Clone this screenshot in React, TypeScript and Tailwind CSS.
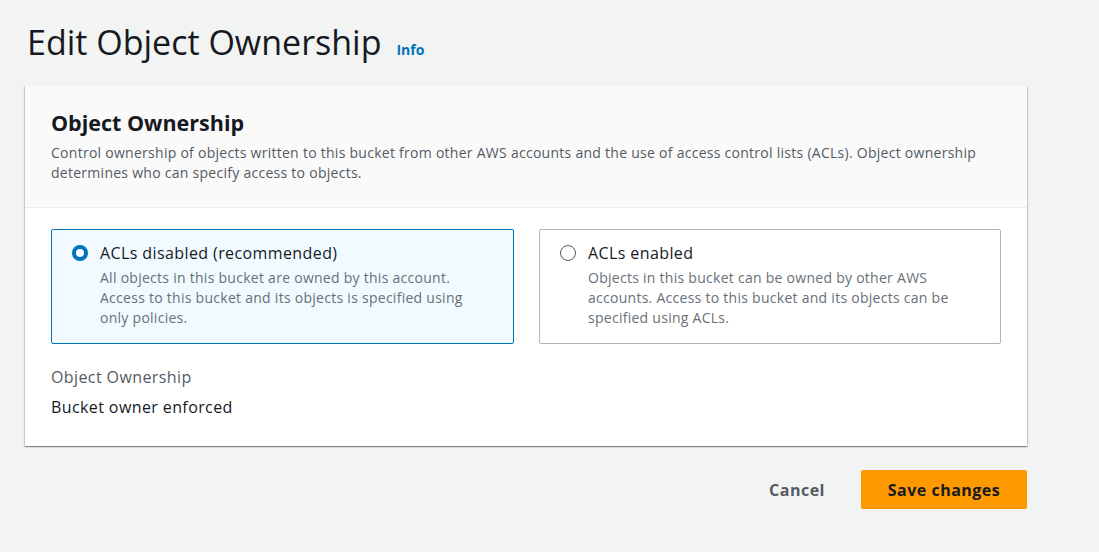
const font = { fontFamily: '"Open Sans", "Noto Sans", sans-serif' };

const Radio = ({ checked }: { checked: boolean }) =>
  checked ? (
    <span className="box-border inline-block h-4 w-4 shrink-0 rounded-full border-[4px] border-[#0073bb] bg-white" />
  ) : (
    <span className="box-border inline-block h-4 w-4 shrink-0 rounded-full border border-[#545b64] bg-white" />
  );

const Option = ({ checked, title, children }: { checked: boolean; title: string; children: React.ReactNode }) => (
  <div
    className={
      checked
        ? 'h-[115px] w-[463px] rounded-[2px] border border-[#0073bb] bg-[#f1faff] pl-[20px] pt-[12px]'
        : 'h-[115px] w-[462px] rounded-[2px] border border-[#aab7b8] bg-white pl-[20px] pt-[12px]'
    }
  >
    <div className="flex items-center gap-[12px]">
      <Radio checked={checked} />
      <span className="text-[16px] leading-[22px] tracking-[0.4px] text-[#16191f]">{title}</span>
    </div>
    <p className="mt-[4px] max-w-[400px] pl-[28px] text-[14px] leading-[20px] tracking-[0.27px] text-[#687078]">{children}</p>
  </div>
);

export default function App() {
  return (
    <div className="h-[552px] w-[1099px] overflow-hidden bg-[#f2f3f3]" style={font}>
      <div className="flex items-baseline gap-[15px] pl-[27px] pt-[20px]">
        <h1 className="text-[34px] leading-[44px] font-normal text-[#16191f]">Edit Object Ownership</h1>
        <a className="text-[14px] font-bold text-[#0073bb]">Info</a>
      </div>

      <div className="ml-[25px] mt-[22px] w-[1002px] bg-white shadow-[0_1px_1px_0_rgba(0,28,36,0.3),1px_1px_1px_0_rgba(0,28,36,0.15),-1px_1px_1px_0_rgba(0,28,36,0.15)]">
        <div className="h-[122px] border-b border-[#eaeded] bg-[#fafafa] px-[26px] pt-[23px]">
          <h2 className="text-[21.5px] leading-[28px] font-bold text-[#16191f]">Object Ownership</h2>
          <p className="mt-[6px] text-[14px] leading-[20px] tracking-[0.27px] text-[#545b64]">
            Control ownership of objects written to this bucket from other AWS accounts and the use of access control lists (ACLs). Object ownership determines who can specify access to objects.
          </p>
        </div>
        <div className="px-[26px] pt-[21px] pb-[28px]">
          <div className="flex gap-[25px]">
            <Option checked title="ACLs disabled (recommended)">
              All objects in this bucket are owned by this account. Access to this bucket and its objects is specified using only policies.
            </Option>
            <Option checked={false} title="ACLs enabled">
              Objects in this bucket can be owned by other AWS accounts. Access to this bucket and its objects can be specified using ACLs.
            </Option>
          </div>
          <div className="mt-[22px] text-[16px] leading-[22px] tracking-[0.4px] text-[#545b64]">Object Ownership</div>
          <div className="mt-[8px] text-[16px] leading-[22px] tracking-[0.4px] text-[#16191f]">Bucket owner enforced</div>
        </div>
      </div>

      <div className="flex w-[1027px] items-center justify-end gap-[36px] pt-[24px]">
        <button className="text-[16px] font-bold tracking-[0.5px] text-[#545b64]">Cancel</button>
        <button className="h-[39px] w-[166px] rounded-[2px] bg-[#ff9900] text-[16px] font-bold tracking-[0.5px] text-[#16191f]">Save changes</button>
      </div>
    </div>
  );
}
